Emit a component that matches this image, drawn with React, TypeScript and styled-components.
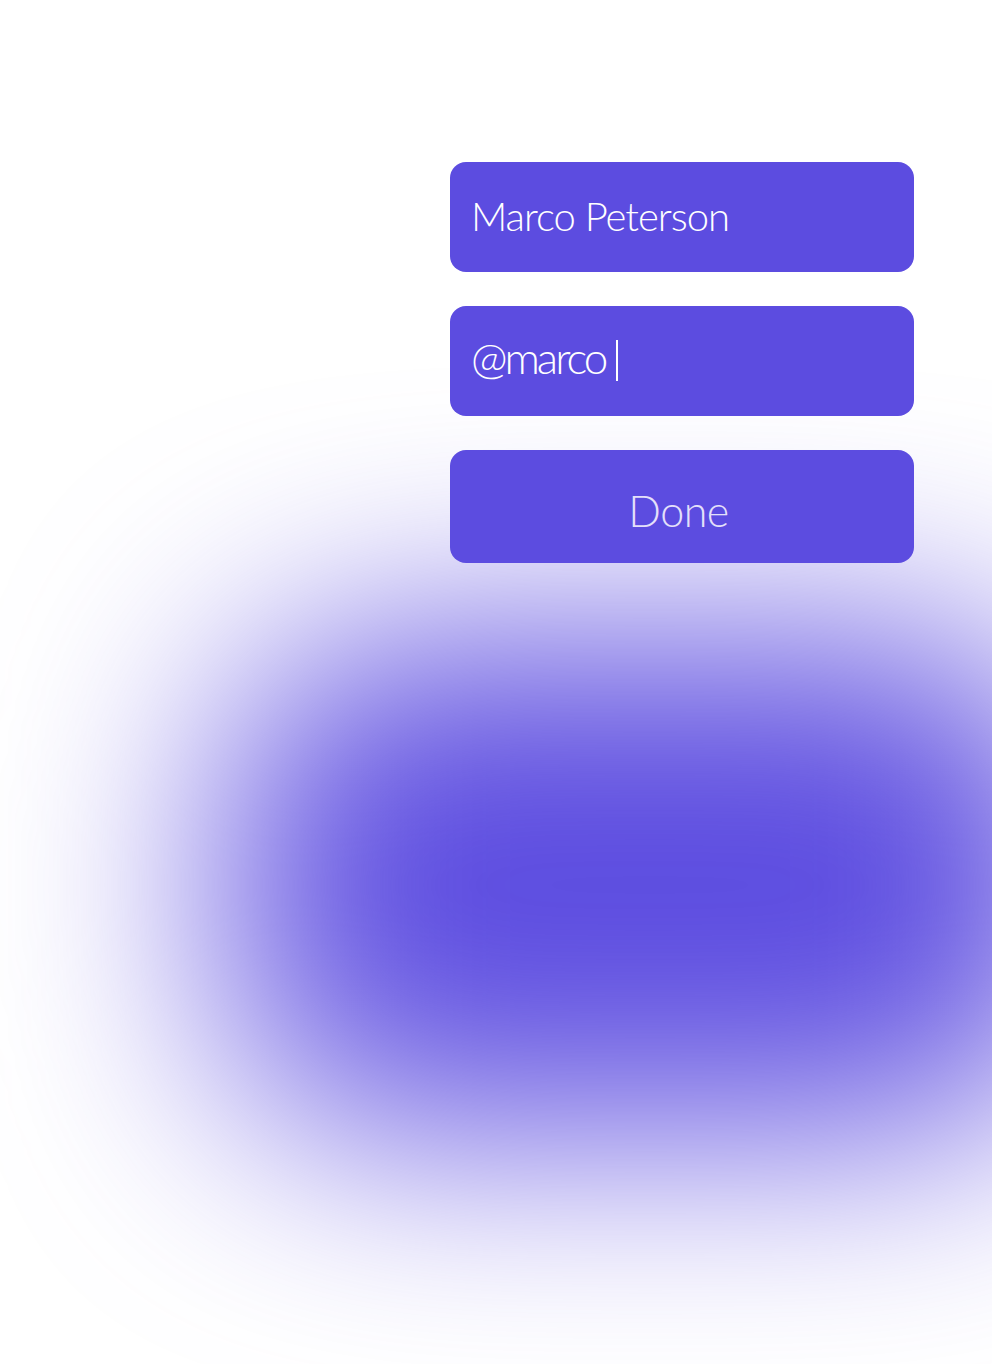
import styled, { createGlobalStyle } from "styled-components";

const GlobalStyle = createGlobalStyle`
  html, body {
    margin: 0;
    padding: 0;
    background: #ffffff;
  }
`;

function App() {
  return (
    <Page>
      <GlobalStyle />
      <Glow />
      <Form>
        <Field>
          <FieldText size="40px" spacing="-1px">Marco Peterson</FieldText>
        </Field>
        <Field lift="8px">
          <FieldText size="44px" spacing="-3px">@marco</FieldText>
          <Caret />
        </Field>
        <DoneButton>Done</DoneButton>
      </Form>
    </Page>
  );
}

export default App;

interface TextProps {
  size: string;
  spacing: string;
}

interface FieldProps {
  lift?: string;
}

const Page = styled.div`
  position: relative;
  width: 992px;
  height: 1364px;
  overflow: hidden;
  background: #ffffff;
  font-family: Lato, "Liberation Sans", sans-serif;
`;

const Glow = styled.div`
  position: absolute;
  left: 230px;
  top: 640px;
  width: 840px;
  height: 490px;
  border-radius: 160px;
  background: #5c4ce0;
  filter: blur(115px);
`;

const Form = styled.div`
  position: relative;
  display: flex;
  flex-direction: column;
  gap: 34px;
  width: 464px;
  margin-left: 450px;
  padding-top: 162px;
`;

const Field = styled.div<FieldProps>`
  display: flex;
  align-items: center;
  height: 110px;
  padding: 0 21px ${p => p.lift || "2px"};
  box-sizing: border-box;
  border-radius: 16px;
  background: #5c4ce0;
`;

const FieldText = styled.span<TextProps>`
  color: #ffffff;
  font-size: ${p => p.size};
  font-weight: 300;
  letter-spacing: ${p => p.spacing};
  line-height: 1;
`;

const Caret = styled.span`
  display: inline-block;
  width: 2px;
  height: 41px;
  margin-left: 11px;
  margin-top: 6px;
  background: #ffffff;
`;

const DoneButton = styled.button`
  height: 113px;
  border: 0;
  border-radius: 16px;
  background: #5c4ce0;
  color: #e4e0fa;
  font-family: Lato, "Liberation Sans", sans-serif;
  font-size: 43px;
  font-weight: 300;
  letter-spacing: -0.5px;
  padding: 8px 7px 0 0;
`;
